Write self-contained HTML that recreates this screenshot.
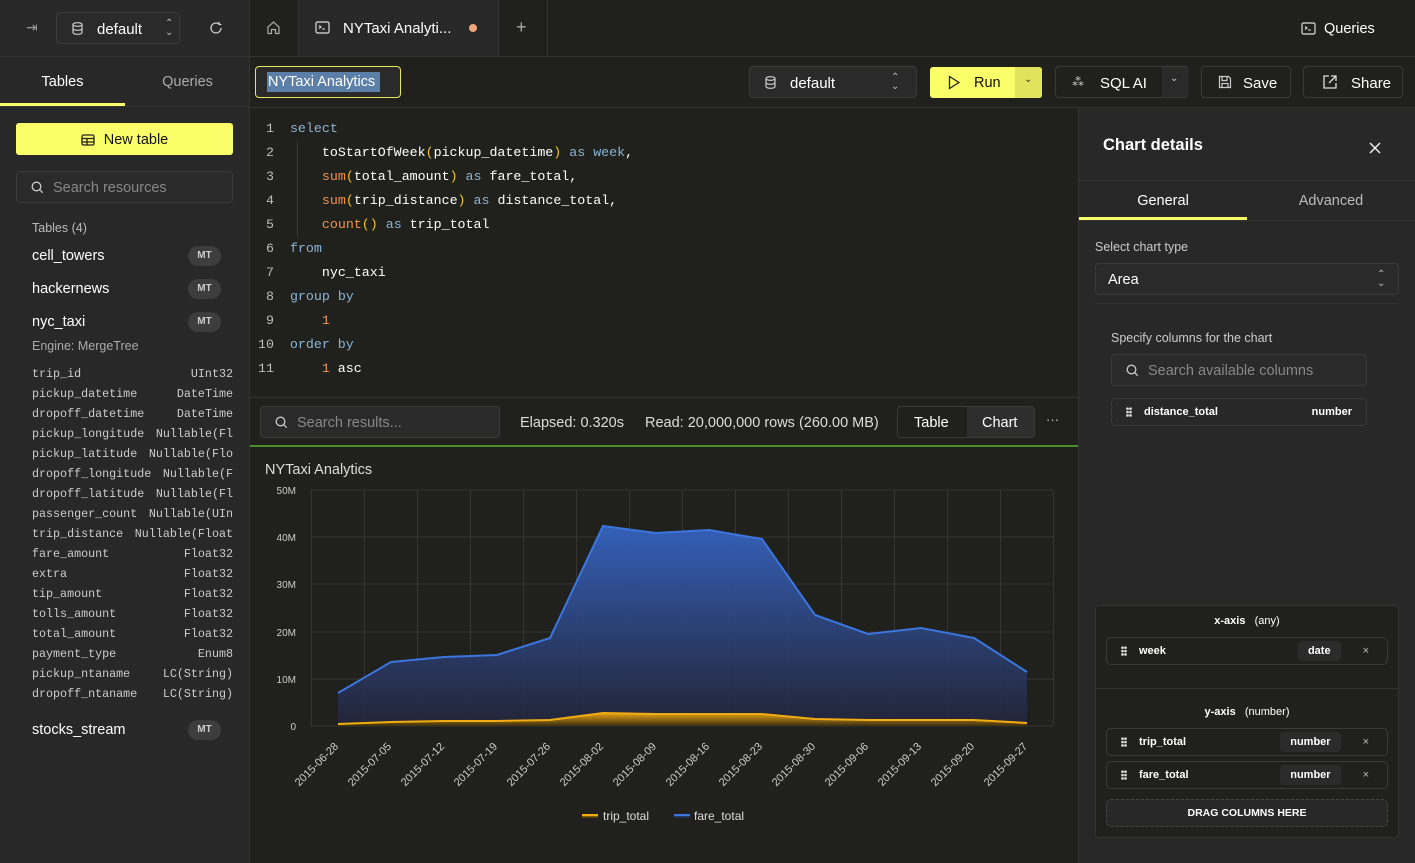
<!DOCTYPE html>
<html><head><meta charset="utf-8">
<style>
*{box-sizing:border-box;margin:0;padding:0}
body{width:1415px;height:863px;overflow:hidden;background:#20201c;font-family:"Liberation Sans",sans-serif;color:#fff;position:relative;font-size:14px}
.a{position:absolute}
.mono{font-family:"Liberation Mono",monospace}
.btn{position:absolute;border:1px solid #3a3a3a;border-radius:4px;display:flex;align-items:center}
.sep{position:absolute;background:#333}
.code div{height:24px;line-height:24px;white-space:pre}
.ln{color:#bbb}
.kw{color:#8ab4d6}
.fn{color:#f0944c}
.pa{color:#f5c518}
.cols div{display:flex;justify-content:space-between;height:20px;line-height:20px;color:#ccc;font-size:11.7px}
.tb{display:flex;justify-content:space-between;align-items:center;height:33px;font-size:14.5px}
.mt{background:#3d3d3d;border-radius:10px;width:33px;height:20px;font-size:10px;color:#ccc;text-align:center;line-height:20px;font-weight:bold}
.pill{position:absolute;border:1px solid #3a3a3a;border-radius:5px;height:28px;display:flex;align-items:center;font-size:11px;font-weight:bold}
.dots{display:inline-block;width:6px;height:10px;background:radial-gradient(circle,#ddd 1.2px,transparent 1.5px) 0 0/3px 3.4px;margin:0 12px 0 14px}
.tag{background:#2b2b2b;border-radius:4px;padding:4px 10px}
</style></head><body>
<div class="a" style="left:0;top:0;width:250px;height:863px;background:#282828"></div>
<div class="sep" style="left:249px;top:0;width:1px;height:863px;background:#333"></div>
<div class="a" style="left:26px;top:19px;color:#999;font-size:14px">⇥</div>
<div class="btn" style="left:56px;top:12px;width:124px;height:32px;background:#2a2a2a">
 <svg class="a" style="left:15px;top:9px" width="11" height="13" viewBox="0 0 11 13"><ellipse cx="5.5" cy="2.5" rx="4.5" ry="1.8" fill="none" stroke="#ccc" stroke-width="1.2"/><path d="M1 2.5v8c0 1 2 1.8 4.5 1.8S10 11.5 10 10.5v-8M1 6.5c0 1 2 1.8 4.5 1.8S10 7.5 10 6.5" fill="none" stroke="#ccc" stroke-width="1.2"/></svg>
 <span class="a" style="left:40px;top:8px;font-size:15px">default</span>
 <span class="a" style="left:108px;top:6px;font-size:10px;color:#bbb;line-height:9px">⌃<br>⌄</span>
</div>
<svg class="a" style="left:209px;top:21px" width="14" height="14" viewBox="0 0 14 14"><path d="M12 7a5 5 0 1 1-2-4M10 1v2.5h2.5" fill="none" stroke="#ccc" stroke-width="1.3"/></svg>
<div class="sep" style="left:0;top:56px;width:1415px;height:1px"></div>
<div class="a" style="left:0;top:74px;width:125px;text-align:center;font-size:14.5px">Tables</div>
<div class="a" style="left:125px;top:74px;width:125px;text-align:center;font-size:14.5px;color:#aaa">Queries</div>
<div class="a" style="left:0;top:103px;width:125px;height:3px;background:#faff69"></div>
<div class="sep" style="left:0;top:106px;width:250px;height:1px"></div>
<div class="a" style="left:16px;top:123px;width:217px;height:32px;background:#faff69;border-radius:3px;color:#111;font-size:14.5px;display:flex;align-items:center;justify-content:center;padding-top:1px">
 <svg width="14" height="12" viewBox="0 0 14 12" style="margin-right:9px"><rect x="1" y="1" width="12" height="10" rx="1.5" fill="none" stroke="#222" stroke-width="1.3"/><path d="M1 4.5h12M1 8h12M6 4.5V11" stroke="#222" stroke-width="1.3"/></svg>New table</div>
<div class="btn" style="left:16px;top:171px;width:217px;height:32px;background:#2a2a2a">
 <svg class="a" style="left:14px;top:9px" width="13" height="13" viewBox="0 0 13 13"><circle cx="5.5" cy="5.5" r="4.3" fill="none" stroke="#ccc" stroke-width="1.3"/><path d="M8.7 8.7l3 3" stroke="#ccc" stroke-width="1.3"/></svg>
 <span class="a" style="left:36px;top:8px;color:#888;font-size:14.5px">Search resources</span></div>
<div class="a" style="left:32px;top:221px;font-size:12.5px;color:#bbb">Tables (4)</div>
<div class="a" style="left:32px;top:239px;width:189px">
 <div class="tb"><span>cell_towers</span><span class="mt">MT</span></div>
 <div class="tb"><span>hackernews</span><span class="mt">MT</span></div>
 <div class="tb"><span>nyc_taxi</span><span class="mt">MT</span></div>
</div>
<div class="a" style="left:32px;top:339px;font-size:12.5px;color:#aaa">Engine: MergeTree</div>
<div class="a cols mono" style="left:32px;top:364px;width:201px;overflow:hidden">
<div><span>trip_id</span><span>UInt32</span></div>
<div><span>pickup_datetime</span><span>DateTime</span></div>
<div><span>dropoff_datetime</span><span>DateTime</span></div>
<div><span>pickup_longitude</span><span>Nullable(Fl</span></div>
<div><span>pickup_latitude</span><span>Nullable(Flo</span></div>
<div><span>dropoff_longitude</span><span>Nullable(F</span></div>
<div><span>dropoff_latitude</span><span>Nullable(Fl</span></div>
<div><span>passenger_count</span><span>Nullable(UIn</span></div>
<div><span>trip_distance</span><span>Nullable(Float</span></div>
<div><span>fare_amount</span><span>Float32</span></div>
<div><span>extra</span><span>Float32</span></div>
<div><span>tip_amount</span><span>Float32</span></div>
<div><span>tolls_amount</span><span>Float32</span></div>
<div><span>total_amount</span><span>Float32</span></div>
<div><span>payment_type</span><span>Enum8</span></div>
<div><span>pickup_ntaname</span><span>LC(String)</span></div>
<div><span>dropoff_ntaname</span><span>LC(String)</span></div>
</div>
<div class="a" style="left:32px;top:713px;width:189px"><div class="tb"><span>stocks_stream</span><span class="mt">MT</span></div></div>

<svg class="a" style="left:266px;top:20px" width="15" height="15" viewBox="0 0 15 15"><path d="M2 7L7.5 2 13 7v6.5H9.5V9.5h-4v4H2z" fill="none" stroke="#aaa" stroke-width="1.2"/></svg>
<div class="sep" style="left:298px;top:0;width:1px;height:56px"></div>
<div class="a" style="left:299px;top:0;width:199px;height:56px;background:#282828"></div>
<svg class="a" style="left:315px;top:21px" width="15" height="13" viewBox="0 0 15 13"><rect x="1" y="1" width="13" height="11" rx="1.5" fill="none" stroke="#ddd" stroke-width="1.2"/><path d="M4 4.5l2 1.5-2 1.5M7 8h3" stroke="#ddd" stroke-width="1.1" fill="none"/></svg>
<div class="a" style="left:343px;top:20px;font-size:15px">NYTaxi Analyti...</div>
<div class="a" style="left:469px;top:24px;width:8px;height:8px;border-radius:50%;background:#f4a57a"></div>
<div class="sep" style="left:498px;top:0;width:1px;height:56px"></div>
<div class="a" style="left:516px;top:17px;font-size:18px;color:#aaa">+</div>
<div class="sep" style="left:547px;top:0;width:1px;height:56px"></div>
<svg class="a" style="left:1301px;top:22px" width="15" height="13" viewBox="0 0 15 13"><rect x="1" y="1" width="13" height="11" rx="1.5" fill="none" stroke="#ddd" stroke-width="1.2"/><path d="M4 4.5l2 1.5-2 1.5M7 8h3" stroke="#ddd" stroke-width="1.1" fill="none"/></svg>
<div class="a" style="left:1324px;top:21px;font-size:14.5px">Queries</div>

<div class="a" style="left:255px;top:66px;width:146px;height:32px;border:1.5px solid #e4e85a;border-radius:4px;background:#2a2a2a"></div>
<div class="a" style="left:267px;top:72px;width:113px;height:20px;background:#5b7fa8"></div>
<div class="a" style="left:268px;top:74px;font-size:14.5px">NYTaxi Analytics</div>
<div class="btn" style="left:749px;top:66px;width:168px;height:32px;background:#2a2a2a">
 <svg class="a" style="left:15px;top:9px" width="11" height="13" viewBox="0 0 11 13"><ellipse cx="5.5" cy="2.5" rx="4.5" ry="1.8" fill="none" stroke="#ccc" stroke-width="1.2"/><path d="M1 2.5v8c0 1 2 1.8 4.5 1.8S10 11.5 10 10.5v-8M1 6.5c0 1 2 1.8 4.5 1.8S10 7.5 10 6.5" fill="none" stroke="#ccc" stroke-width="1.2"/></svg>
 <span class="a" style="left:40px;top:8px;font-size:15px">default</span>
 <span class="a" style="left:141px;top:6px;font-size:10px;color:#bbb;line-height:9px">⌃<br>⌄</span></div>
<div class="a" style="left:930px;top:67px;width:112px;height:31px;background:#faff69;border-radius:3px"></div>
<div class="a" style="left:1015px;top:67px;width:27px;height:31px;background:#e0e35c;border-radius:0 3px 3px 0"></div>
<svg class="a" style="left:948px;top:75px" width="12" height="15" viewBox="0 0 12 15"><path d="M1.5 1.5v12l9.5-6z" fill="none" stroke="#222" stroke-width="1.3"/></svg>
<div class="a" style="left:974px;top:75px;font-size:14.5px;color:#111">Run</div>
<div class="a" style="left:1024px;top:74px;font-size:10px;color:#333">⌄</div>
<div class="btn" style="left:1055px;top:66px;width:134px;height:32px">
 <span class="a" style="left:16px;top:8px;font-size:12px;color:#ccc">⁂</span>
 <span class="a" style="left:44px;top:8px;font-size:15px">SQL AI</span>
 <div class="a" style="left:106px;top:0;width:27px;height:30px;background:#2a2a2a"></div>
 <span class="a" style="left:114px;top:6px;font-size:10px;color:#ccc">⌄</span></div>
<div class="btn" style="left:1201px;top:66px;width:90px;height:32px">
 <svg class="a" style="left:16px;top:8px" width="14" height="14" viewBox="0 0 14 14"><path d="M1.5 1.5h9l2 2v9h-11z M4 1.5v4h5v-4 M4 12.5v-4h6v4" fill="none" stroke="#ccc" stroke-width="1.2"/></svg>
 <span class="a" style="left:41px;top:8px;font-size:15px">Save</span></div>
<div class="btn" style="left:1303px;top:66px;width:100px;height:32px">
 <svg class="a" style="left:18px;top:7px" width="16" height="16" viewBox="0 0 16 16"><path d="M7 2H2v12h12V9 M9 2h5v5 M14 2L7 9" fill="none" stroke="#ddd" stroke-width="1.3"/></svg>
 <span class="a" style="left:47px;top:8px;font-size:15px">Share</span></div>
<div class="sep" style="left:250px;top:107px;width:1165px;height:1px"></div>

<div class="a code mono" style="left:266px;top:117px;font-size:13.3px">
<div><span class="ln">1  </span><span class="kw">select</span></div>
<div><span class="ln">2  </span>    toStartOfWeek<span class="pa">(</span>pickup_datetime<span class="pa">)</span> <span class="kw">as week</span>,</div>
<div><span class="ln">3  </span>    <span class="fn">sum</span><span class="pa">(</span>total_amount<span class="pa">)</span> <span class="kw">as</span> fare_total,</div>
<div><span class="ln">4  </span>    <span class="fn">sum</span><span class="pa">(</span>trip_distance<span class="pa">)</span> <span class="kw">as</span> distance_total,</div>
<div><span class="ln">5  </span>    <span class="fn">count</span><span class="pa">()</span> <span class="kw">as</span> trip_total</div>
<div><span class="ln">6  </span><span class="kw">from</span></div>
<div><span class="ln">7  </span>    nyc_taxi</div>
<div><span class="ln">8  </span><span class="kw">group by</span></div>
<div><span class="ln">9  </span>    <span class="fn">1</span></div>
<div><span class="ln" style="margin-left:-8px">10  </span><span class="kw">order by</span></div>
<div><span class="ln" style="margin-left:-8px">11  </span>    <span class="fn">1</span> asc</div>
</div>
<div class="a" style="left:297px;top:141px;width:1px;height:96px;background:#3a3a3a"></div>

<div class="sep" style="left:250px;top:397px;width:828px;height:1px"></div>
<div class="btn" style="left:260px;top:406px;width:240px;height:32px;background:#2a2a2a">
 <svg class="a" style="left:14px;top:9px" width="13" height="13" viewBox="0 0 13 13"><circle cx="5.5" cy="5.5" r="4.3" fill="none" stroke="#ccc" stroke-width="1.3"/><path d="M8.7 8.7l3 3" stroke="#ccc" stroke-width="1.3"/></svg>
 <span class="a" style="left:36px;top:8px;color:#888;font-size:14.5px">Search results...</span></div>
<div class="a" style="left:520px;top:415px;font-size:14.5px;color:#ddd">Elapsed: 0.320s</div>
<div class="a" style="left:645px;top:415px;font-size:14.5px;color:#ddd">Read: 20,000,000 rows (260.00 MB)</div>
<div class="btn" style="left:897px;top:406px;width:138px;height:32px;overflow:hidden">
 <span class="a" style="left:16px;top:8px;font-size:14.5px">Table</span>
 <div class="a" style="left:69px;top:0;width:69px;height:30px;background:#2e2e2e"></div>
 <span class="a" style="left:84px;top:8px;font-size:14.5px">Chart</span></div>
<div class="a" style="left:1046px;top:412px;font-size:13px;color:#ccc">···</div>
<div class="a" style="left:250px;top:445px;width:828px;height:2px;background:#4a8f2a"></div>

<div class="a" style="left:265px;top:462px;font-size:14.5px;color:#ddd">NYTaxi Analytics</div>
<svg class="a" style="left:250px;top:448px" width="828" height="415" viewBox="0 0 828 415" font-family="Liberation Sans, sans-serif">
<defs>
<linearGradient id="bg" x1="0" y1="0" x2="0" y2="1"><stop offset="0" stop-color="#3563c0" stop-opacity=".95"/><stop offset="1" stop-color="#23253a" stop-opacity=".9"/></linearGradient>
<linearGradient id="yg" x1="0" y1="0" x2="0" y2="1"><stop offset="0" stop-color="#e8a415"/><stop offset="1" stop-color="#3a2e10"/></linearGradient>
</defs>
<g stroke="#353535" stroke-width="1">
<path d="M61 42H803M61 89H803M61 136H803M61 184H803M61 231H803M61 278H803"/>
<path d="M61.5 42V278M114.5 42V278M167.5 42V278M220.5 42V278M273.5 42V278M326.5 42V278M379.5 42V278M432.5 42V278M485.5 42V278M538.5 42V278M591.5 42V278M644.5 42V278M697.5 42V278M750.5 42V278M803.5 42V278"/>
</g>
<g fill="#ccc" font-size="10" text-anchor="end">
<text x="46" y="46">50M</text><text x="46" y="93">40M</text><text x="46" y="140">30M</text><text x="46" y="188">20M</text><text x="46" y="235">10M</text><text x="46" y="282">0</text>
</g>
<path d="M88 245L141 214L194 209L247 207L300 190L353 78L406 85L459 82L512 91L565 167L618 186L671 180L724 190L777 224V278H88Z" fill="url(#bg)"/>
<path d="M88 245L141 214L194 209L247 207L300 190L353 78L406 85L459 82L512 91L565 167L618 186L671 180L724 190L777 224" fill="none" stroke="#3b76de" stroke-width="2"/>
<path d="M88 276L141 274L194 273L247 273L300 272L353 265L406 266L459 266L512 266L565 271L618 272L671 272L724 272L777 275V278H88Z" fill="url(#yg)"/>
<path d="M88 276L141 274L194 273L247 273L300 272L353 265L406 266L459 266L512 266L565 271L618 272L671 272L724 272L777 275" fill="none" stroke="#f0ac10" stroke-width="2"/>
<g fill="#ccc" font-size="11" text-anchor="end">
<text transform="translate(89,299) rotate(-45)">2015-06-28</text>
<text transform="translate(142,299) rotate(-45)">2015-07-05</text>
<text transform="translate(195,299) rotate(-45)">2015-07-12</text>
<text transform="translate(248,299) rotate(-45)">2015-07-19</text>
<text transform="translate(301,299) rotate(-45)">2015-07-26</text>
<text transform="translate(354,299) rotate(-45)">2015-08-02</text>
<text transform="translate(407,299) rotate(-45)">2015-08-09</text>
<text transform="translate(460,299) rotate(-45)">2015-08-16</text>
<text transform="translate(513,299) rotate(-45)">2015-08-23</text>
<text transform="translate(566,299) rotate(-45)">2015-08-30</text>
<text transform="translate(619,299) rotate(-45)">2015-09-06</text>
<text transform="translate(672,299) rotate(-45)">2015-09-13</text>
<text transform="translate(725,299) rotate(-45)">2015-09-20</text>
<text transform="translate(778,299) rotate(-45)">2015-09-27</text>
</g>
<rect x="332" y="366" width="16" height="4" fill="url(#yg)"/><rect x="332" y="366" width="16" height="2" fill="#f0ac10"/>
<text x="353" y="372" fill="#ddd" font-size="12">trip_total</text>
<rect x="424" y="366" width="16" height="4" fill="url(#bg)"/><rect x="424" y="366" width="16" height="2" fill="#3b76de"/>
<text x="444" y="372" fill="#ddd" font-size="12">fare_total</text>
</svg>

<div class="a" style="left:1078px;top:108px;width:337px;height:755px;background:#282828;border-left:1px solid #333"></div>
<div class="a" style="left:1103px;top:136px;font-size:16.5px;font-weight:bold">Chart details</div>
<svg class="a" style="left:1369px;top:142px" width="12" height="12" viewBox="0 0 12 12"><path d="M1 1l10 10M11 1L1 11" stroke="#eee" stroke-width="1.5"/></svg>
<div class="sep" style="left:1079px;top:180px;width:336px;height:1px"></div>
<div class="a" style="left:1079px;top:193px;width:168px;text-align:center;font-size:14.5px">General</div>
<div class="a" style="left:1247px;top:193px;width:168px;text-align:center;font-size:14.5px;color:#bbb">Advanced</div>
<div class="a" style="left:1079px;top:217px;width:168px;height:3px;background:#faff69"></div>
<div class="sep" style="left:1079px;top:220px;width:336px;height:1px"></div>
<div class="a" style="left:1095px;top:240px;font-size:12.5px;color:#ccc">Select chart type</div>
<div class="btn" style="left:1095px;top:263px;width:304px;height:32px;background:#2a2a2a">
 <span class="a" style="left:12px;top:8px;font-size:14.5px">Area</span>
 <span class="a" style="left:281px;top:6px;font-size:10px;color:#bbb;line-height:9px">⌃<br>⌄</span></div>
<div class="sep" style="left:1095px;top:303px;width:304px;height:1px"></div>
<div class="a" style="left:1111px;top:331px;font-size:12.5px;color:#ccc">Specify columns for the chart</div>
<div class="btn" style="left:1111px;top:354px;width:256px;height:32px;background:#2a2a2a">
 <svg class="a" style="left:14px;top:9px" width="13" height="13" viewBox="0 0 13 13"><circle cx="5.5" cy="5.5" r="4.3" fill="none" stroke="#ccc" stroke-width="1.3"/><path d="M8.7 8.7l3 3" stroke="#ccc" stroke-width="1.3"/></svg>
 <span class="a" style="left:36px;top:8px;color:#888;font-size:14.5px">Search available columns</span></div>
<div class="pill" style="left:1111px;top:398px;width:256px"><span class="dots" style="margin-left:14px"></span><span>distance_total</span><span style="margin-left:auto;margin-right:14px">number</span></div>

<div class="a" style="left:1095px;top:605px;width:304px;height:233px;background:#20201c;border:1px solid #333;border-radius:4px"></div>
<div class="a" style="left:1095px;top:615px;width:304px;text-align:center;font-size:11px;font-weight:bold">x-axis &nbsp; <span style="font-weight:normal">(any)</span></div>
<div class="pill" style="left:1106px;top:637px;width:282px"><span class="dots"></span><span>week</span><span class="tag" style="margin-left:auto">date</span><span style="margin:0 18px 0 22px;color:#bbb;font-weight:normal">×</span></div>
<div class="sep" style="left:1096px;top:688px;width:302px;height:1px"></div>
<div class="a" style="left:1095px;top:706px;width:304px;text-align:center;font-size:11px;font-weight:bold">y-axis &nbsp; <span style="font-weight:normal">(number)</span></div>
<div class="pill" style="left:1106px;top:728px;width:282px"><span class="dots"></span><span>trip_total</span><span class="tag" style="margin-left:auto">number</span><span style="margin:0 18px 0 22px;color:#bbb;font-weight:normal">×</span></div>
<div class="pill" style="left:1106px;top:761px;width:282px"><span class="dots"></span><span>fare_total</span><span class="tag" style="margin-left:auto">number</span><span style="margin:0 18px 0 22px;color:#bbb;font-weight:normal">×</span></div>
<div class="a" style="left:1106px;top:799px;width:282px;height:28px;border:1px dashed #444;border-radius:5px;background:#282828;text-align:center;line-height:27px;font-size:10.5px;font-weight:bold">DRAG COLUMNS HERE</div>
</body></html>
